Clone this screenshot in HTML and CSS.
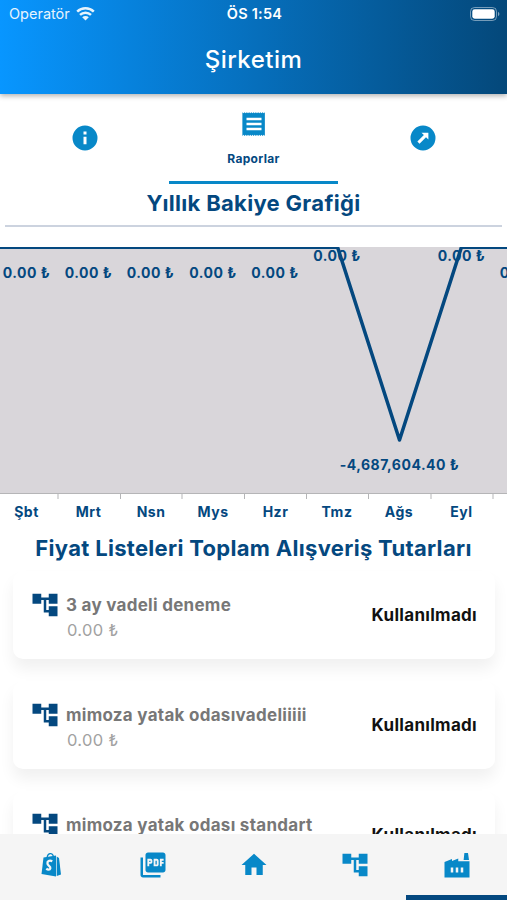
FILE: index.html
```html
<!DOCTYPE html>
<html lang="tr">
  <head>
    <meta charset="UTF-8">
    <title>Şirketim</title>
    <link rel="stylesheet" href="styles.css">
  </head>

  <body>
    <svg width="0" height="0" class="sprite">
      <symbol id="tree" viewBox="0 0 24 24">
        <path d="M22 11V3h-7v3H9V3H2v8h7V8h2v10h4v3h7v-8h-7v3h-2V8h2v3z"/>
      </symbol>
    </svg>

    <header>
      <div class="status-bar">
        <div class="carrier">
          <span>Operatör</span>
          <svg width="19" height="14" viewBox="0 0 19 14">
            <path d="M1.2 4.700a12 12 0 0 1 16.600 0M4 7.900a8 8 0 0 1 11 0" fill="none" stroke="#fff" stroke-width="2.500"/>
            <path d="M9.500 13.500L6.200 10.300a4.700 4.700 0 0 1 6.600 0z" fill="#fff"/>
          </svg>
        </div>
        <span class="time">ÖS 1:54</span>
        <svg class="battery" width="30" height="14" viewBox="0 0 30 14">
          <rect x=".5" y=".5" width="26" height="13" rx="4" fill="none" stroke="#fff" stroke-opacity=".45"/>
          <rect x="2.300" y="2.300" width="22.400" height="9.400" rx="2.400" fill="#fff"/>
          <path d="M28 4.800c1.900.8 1.900 3.600 0 4.400z" fill="#fff" fill-opacity=".5"/>
        </svg>
      </div>
      <h1>Şirketim</h1>
    </header>

    <div class="tabs">
      <div class="tab">
        <svg class="icon" viewBox="0 0 24 24"><path d="M12 2a10 10 0 1 0 0 20 10 10 0 0 0 0-20zm1.200 15h-2.400v-6h2.400zm0-7.800h-2.400V6.800h2.400z"/></svg>
      </div>
      <div class="tab active">
        <svg class="icon" viewBox="0 0 24 24"><path d="M18 17H6v-2h12v2zm0-4H6v-2h12v2zm0-4H6V7h12v2zM2.700 21.500l.9-.9.9.9.900-.9.900.9.900-.9.900.9.900-.9.900.9.900-.9.900.9.900-.9.900.9.900-.9.900.9.900-.9.900.9.900-.9.900.9.900-.9.900.9V2.500l-.9.900-.9-.9-.9.900-.9-.9-.9.900-.9-.9-.9.900-.9-.9-.9.900-.9-.9-.9.900-.9-.9-.9.900-.9-.9-.9.900-.9-.9-.9.900-.9-.9-.9.900-.9-.9z"/></svg>
        <span>Raporlar</span>
      </div>
      <div class="tab">
        <svg class="icon" viewBox="0 0 24 24"><path d="M12 2a10 10 0 1 0 0 20 10 10 0 0 0 0-20zm4.300 11.200-1.900-1.900-5.200 5.200-1.700-1.700 5.200-5.200-1.900-1.900h5.500z"/></svg>
      </div>
    </div>

    <main>
      <h2 class="chart-title">Yıllık Bakiye Grafiği</h2>
      <hr>
      <svg class="chart" width="507" height="284" viewBox="0 0 507 284">
        <rect y="0" width="507" height="247" fill="#d9d6da"/>
        <g class="values">
          <text x="26.500" y="31">0.00 ₺</text>
          <text x="88.500" y="31">0.00 ₺</text>
          <text x="150.500" y="31">0.00 ₺</text>
          <text x="213" y="31">0.00 ₺</text>
          <text x="275" y="31">0.00 ₺</text>
          <text x="337" y="14">0.00 ₺</text>
          <text x="399.500" y="223">-4,687,604.40 ₺</text>
          <text x="461.500" y="14">0.00 ₺</text>
          <text x="523.500" y="31">0.00 ₺</text>
        </g>
        <path d="M0 1H338M461 1H507" stroke="#04487f" stroke-width="2"/>
        <polyline points="337.500,0 399.500,193 461.500,0" fill="none" stroke="#04487f" stroke-width="3.500" stroke-linejoin="round"/>
        <path d="M0 246.500H507M58 246v6M120.500 246v6M182 246v6M244.500 246v6M306.500 246v6M368.500 246v6M431 246v6M493 246v6" stroke="#b5b5b7" fill="none"/>
        <g class="months">
          <text x="26.500" y="270">Şbt</text>
          <text x="88.500" y="270">Mrt</text>
          <text x="151" y="270">Nsn</text>
          <text x="213" y="270">Mys</text>
          <text x="275.500" y="270">Hzr</text>
          <text x="337" y="270">Tmz</text>
          <text x="399" y="270">Ağs</text>
          <text x="461.500" y="270">Eyl</text>
        </g>
      </svg>

      <h2 class="list-title">Fiyat Listeleri Toplam Alışveriş Tutarları</h2>
      <div class="list">
        <div class="card">
          <svg class="icon"><use href="#tree"/></svg>
          <div class="info">
            <div class="name">3 ay vadeli deneme</div>
            <div class="amount">0.00 ₺</div>
          </div>
          <div class="state">Kullanılmadı</div>
        </div>
        <div class="card">
          <svg class="icon"><use href="#tree"/></svg>
          <div class="info">
            <div class="name">mimoza yatak odasıvadeliiiii</div>
            <div class="amount">0.00 ₺</div>
          </div>
          <div class="state">Kullanılmadı</div>
        </div>
        <div class="card">
          <svg class="icon"><use href="#tree"/></svg>
          <div class="info">
            <div class="name">mimoza yatak odası standart</div>
          </div>
          <div class="state">Kullanılmadı</div>
        </div>
      </div>
    </main>

    <nav>
      <a>
        <svg class="icon" viewBox="0 0 30 30">
          <path d="M7.500 7.500 20 5.500V26.500L5.500 24z"/>
          <path d="M20.700 6.500 23 8l2 16.500-4.300 1.500z"/>
          <path d="M11 8c.5-5 5-6 6.500-1.500" fill="none" stroke="#0888c8" stroke-width="1.200"/>
          <path d="M16.300 11.300c-3-1.400-5.300 0-4.800 2.400.4 2.100 3.400 2.400 2.800 4.700-.4 1.700-2.600 1.500-4 .3" fill="none" stroke="#f5f5f5" stroke-width="2.300"/>
        </svg>
      </a>
      <a>
        <svg class="icon" viewBox="0 0 24 24"><path d="M20 2H8c-1.100 0-2 .9-2 2v12c0 1.100.9 2 2 2h12c1.100 0 2-.9 2-2V4c0-1.100-.9-2-2-2zm-8.500 7.500c0 .8-.7 1.500-1.500 1.500H9v2H7.500V7H10c.8 0 1.500.7 1.500 1.500v1zm5 2c0 .8-.7 1.500-1.500 1.500h-2.500V7H15c.8 0 1.500.7 1.500 1.500v3zm4-3H19v1h1.500V11H19v2h-1.500V7h3v1.500zM9 9.500h1v-1H9v1zM4 6H2v14c0 1.100.9 2 2 2h14v-2H4V6zm10 5.500h1v-3h-1v3z"/></svg>
      </a>
      <a>
        <svg class="icon" viewBox="0 0 24 24"><path d="M10 20v-6h4v6h5v-8h3L12 3 2 12h3v8z"/></svg>
      </a>
      <a>
        <svg class="icon"><use href="#tree"/></svg>
      </a>
      <a class="active">
        <svg class="icon" viewBox="0 0 24 24"><path d="M22 22H2V9.500l6-2.300v1.600l5-2v2.200h9zM17.300 8 17.900 2.300h2.900l.8 5.700zM11 18h2v-4h-2zm-4 0h2v-4H7zm10-4h-2v4h2z"/></svg>
      </a>
    </nav>
  </body>
</html>
```
FILE: styles.css
```css
* {
  box-sizing: border-box;
}

body {
  margin: 0;
  height: 900px;
  display: flex;
  flex-direction: column;
  overflow: hidden;
  background: #fff;
  color: #04487f;
  font-family: Inter, "Liberation Sans", sans-serif;
}

.sprite {
  display: none;
}

.icon {
  width: 30px;
  height: 30px;
  flex: none;
  display: block;
  fill: #0888c8;
}

header {
  height: 94px;
  flex: none;
  color: #fff;
  background: linear-gradient(to right, #0896ff, #04487a);
  box-shadow: 0 2px 5px rgba(0, 0, 0, 0.3);
}

.status-bar {
  height: 27px;
  display: grid;
  grid-template-columns: 1fr auto 1fr;
  align-items: center;
  padding: 0 7px 0 9px;
  font-size: 14.500px;
}

.carrier {
  display: flex;
  align-items: center;
  gap: 6px;
  opacity: 0.9;
}

.time {
  font-weight: 600;
  letter-spacing: 0.25px;
}

.battery {
  justify-self: end;
}

h1 {
  margin: 17px 0 0;
  font-size: 24px;
  line-height: 32px;
  font-weight: 500;
  letter-spacing: 0.5px;
  text-align: center;
}

.tabs {
  height: 90px;
  flex: none;
  display: grid;
  grid-template-columns: repeat(3, 1fr);
}

.tab {
  display: flex;
  flex-direction: column;
  align-items: center;
  justify-content: center;
  gap: 11px;
  border-bottom: 3px solid transparent;
}

.tab.active {
  padding-top: 2px;
  border-color: #0888c8;
}

.tab span {
  font-size: 12px;
  font-weight: 700;
  line-height: 18px;
  letter-spacing: 0.3px;
}

main {
  flex: 1;
  min-height: 0;
  overflow: hidden;
}

h2 {
  margin: 0;
  font-size: 22px;
  font-weight: 700;
  letter-spacing: 0.31px;
  text-align: center;
  white-space: nowrap;
}

.chart-title {
  height: 41px;
  line-height: 38px;
}

hr {
  margin: 0 5px 20px;
  border: none;
  height: 2px;
  background: #ccd3df;
}

.chart {
  display: block;
}

.chart text {
  fill: #04487f;
  font-weight: 700;
  font-size: 14px;
  text-anchor: middle;
  letter-spacing: 0.5px;
}

.list-title {
  height: 36px;
  line-height: 34px;
}

.list {
  display: flex;
  flex-direction: column;
  gap: 22px;
  padding: 4px 12px 0 13px;
}

.card {
  height: 88px;
  flex: none;
  display: flex;
  align-items: center;
  padding: 0 18px 0 17px;
  border-radius: 10px;
  background: #fff;
  box-shadow: 0 10px 15px rgba(0, 0, 0, 0.06);
}

.card .icon {
  fill: #04487f;
  margin-bottom: 20px;
}

.info {
  flex: 1;
  height: 50px;
  margin-top: 5px;
  padding-left: 6px;
  line-height: 25px;
}

.name {
  color: #777;
  font-size: 17px;
  font-weight: 700;
  letter-spacing: 0.28px;
}

.amount {
  padding-left: 1px;
  color: #a2a2a2;
  font-size: 16.500px;
  letter-spacing: 0.35px;
}

.state {
  color: #111;
  font-size: 17px;
  font-weight: 700;
  letter-spacing: 0.3px;
}

nav {
  height: 66px;
  flex: none;
  display: grid;
  grid-template-columns: repeat(5, 1fr);
  background: #f5f5f5;
}

nav a {
  display: flex;
  justify-content: center;
  padding: 16px 0 0 1px;
  border-bottom: 5px solid transparent;
}

nav a.active {
  border-color: #04487f;
}
```
